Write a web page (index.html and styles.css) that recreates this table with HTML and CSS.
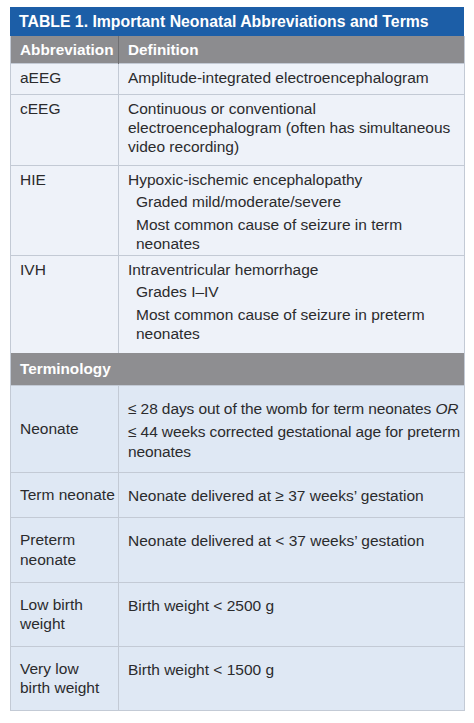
FILE: index.html
```html
<!DOCTYPE html>
<html lang="en">
<head>
<meta charset="utf-8">
<title>Table 1</title>
<link rel="stylesheet" href="styles.css">
</head>
<body>
<div class="panel">
  <div class="title">TABLE 1. Important Neonatal Abbreviations and Terms</div>
  <table class="terms">
    <colgroup><col class="c1"><col class="c2"></colgroup>
    <tr class="head">
      <th class="hd1">Abbreviation</th>
      <th class="hd2">Definition</th>
    </tr>
    <tr class="up r-aeeg">
      <td class="term">aEEG</td>
      <td class="def">Amplitude-integrated electroencephalogram</td>
    </tr>
    <tr class="up r-ceeg">
      <td class="term">cEEG</td>
      <td class="def">Continuous or conventional electroencephalogram (often has simultaneous video recording)</td>
    </tr>
    <tr class="up r-hie">
      <td class="term">HIE</td>
      <td class="def">
        <div>Hypoxic-ischemic encephalopathy</div>
        <div class="sub">Graded mild/moderate/severe</div>
        <div class="sub">Most common cause of seizure in term neonates</div>
      </td>
    </tr>
    <tr class="up r-ivh">
      <td class="term">IVH</td>
      <td class="def">
        <div>Intraventricular hemorrhage</div>
        <div class="sub">Grades I–IV</div>
        <div class="sub">Most common cause of seizure in preterm neonates</div>
      </td>
    </tr>
    <tr class="section">
      <th colspan="2">Terminology</th>
    </tr>
    <tr class="low r-neo">
      <td class="term">Neonate</td>
      <td class="def">
        <div class="nw">≤ 28 days out of the womb for term neonates <i>OR</i></div>
        <div class="gap">≤ 44 weeks corrected gestational age for preterm neonates</div>
      </td>
    </tr>
    <tr class="low r-term">
      <td class="term">Term neonate</td>
      <td class="def">Neonate delivered at ≥ 37 weeks’ gestation</td>
    </tr>
    <tr class="low r-pre">
      <td class="term">Preterm neonate</td>
      <td class="def">Neonate delivered at &lt; 37 weeks’ gestation</td>
    </tr>
    <tr class="low r-lbw">
      <td class="term">Low birth weight</td>
      <td class="def">Birth weight &lt; 2500 g</td>
    </tr>
    <tr class="low r-vlbw">
      <td class="term">Very low<br>birth weight</td>
      <td class="def">Birth weight &lt; 1500 g</td>
    </tr>
  </table>
</div>
</body>
</html>
```

FILE: styles.css
```css
* { box-sizing: border-box; }
html, body {
  margin: 0;
  padding: 0;
  background: #ffffff;
}
body {
  font-family: "Liberation Sans", Arial, Helvetica, sans-serif;
  color: #2b2b2d;
}
.panel {
  width: 454px;
  margin: 7px 0 0 10px;
}
.title {
  height: 29px;
  background: #1c5ea7;
  color: #ffffff;
  font-weight: bold;
  font-size: 15.8px;
  line-height: 29px;
  padding-left: 9px;
}
.terms {
  width: 454px;
  border-collapse: collapse;
  table-layout: fixed;
  font-size: 15.5px;
  line-height: 19.3px;
  border-left: 1px solid #c3cad5;
  border-right: 1px solid #c3cad5;
  border-bottom: 1px solid #c3cad5;
}
.c1 { width: 108px; }
.c2 { width: 346px; }
.head { height: 27px; background: #8c8c8f; }
.head th {
  color: #ffffff;
  font-size: 15.3px;
  font-weight: bold;
  text-align: left;
  padding: 0 0 0 9px;
  vertical-align: middle;
}
.head .hd1 { border-right: 1px solid #6f6f72; }
.terms td {
  padding: 4px 0 0 9px;
  vertical-align: top;
  border-top: 1px solid #c3cad5;
}
.terms td.term { border-right: 1px solid #c3cad5; }
.up { background: #eef2f9; }
.low { background: #dfe8f4; }
.r-aeeg { height: 31px; }
.r-ceeg { height: 71px; }
.r-hie { height: 90px; }
.r-ivh { height: 98px; }
.sub {
  margin-top: 3.4px;
  padding-left: 8px;
}
.section { height: 32px; background: #8e8e91; }
.section th {
  color: #ffffff;
  font-size: 15.3px;
  font-weight: bold;
  text-align: left;
  padding: 0 0 0 9px;
  vertical-align: middle;
}
.low td { padding-top: 13.5px; }
.low td.term {
  vertical-align: middle;
  padding-top: 0;
}
.nw { white-space: nowrap; letter-spacing: -0.1px; }
.gap { margin-top: 4px; letter-spacing: -0.1px; }
.r-neo { height: 87px; }
.r-term { height: 45px; }
.r-pre { height: 65px; }
.r-lbw { height: 64px; }
.r-vlbw { height: 64px; }
```
